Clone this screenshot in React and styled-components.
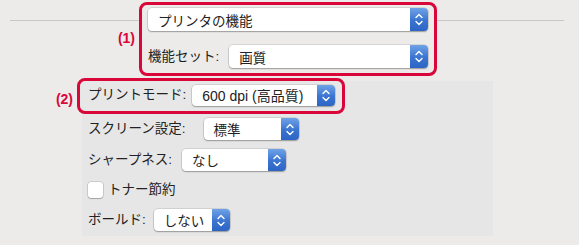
import React from "react";
import styled, { createGlobalStyle } from "styled-components";

const Global = createGlobalStyle`
  html, body { margin: 0; padding: 0; background: #ecebea; }
  body { font-family: "Liberation Sans", "Noto Sans CJK JP", sans-serif; }
`;

const RED = "#d9063a";

const Page = styled.div`
  width: 579px;
  height: 245px;
  background: #ecebea;
  color: #222;
  font-size: 13.5px;
  overflow: hidden;
`;

const TopSection = styled.div`
  display: flex;
  align-items: flex-start;
  padding-top: 2px;
  height: 78px;
  box-sizing: border-box;
`;

const Gutter = styled.div`
  width: ${(p) => p.$w}px;
  flex: none;
  display: flex;
  flex-direction: column;
  align-items: flex-start;
`;

const Rule = styled.div`
  width: ${(p) => p.$w}px;
  height: 1px;
  flex: none;
  background: #c8c8c8;
  margin-top: ${(p) => p.$mt || 0}px;
  margin-left: ${(p) => p.$ml || 0}px;
`;

const Marker = styled.div`
  align-self: stretch;
  color: ${RED};
  font-weight: bold;
  font-size: 14px;
  font-family: "Liberation Sans", sans-serif;
  text-align: right;
  padding-right: ${(p) => p.$pr}px;
  margin-top: ${(p) => p.$mt}px;
  line-height: 16px;
`;

const Callout = styled.div`
  border: 3px solid ${RED};
  border-radius: 8px;
  box-sizing: border-box;
  flex: none;
`;

const Box1 = styled(Callout)`
  width: 298px;
  height: 74px;
  padding: 3px 6px 0 6px;
  display: flex;
  flex-direction: column;
  gap: 14px;
`;

const Box2 = styled(Callout)`
  align-self: flex-start;
  margin: -3px 0 0 -11px;
  padding: 3px 7px 5px 8px;
  display: flex;
  align-items: center;
  gap: 6px;
  background: #e7e7e7;
`;

const Middle = styled.div`
  display: flex;
  align-items: flex-start;
  margin-top: 3px;
`;

const Panel = styled.div`
  width: 411px;
  height: 155px;
  background: #e6e6e6;
  padding-left: 6px;
  box-sizing: border-box;
  display: flex;
  flex-direction: column;
`;

const Rows = styled.div`
  display: flex;
  flex-direction: column;
  gap: 9px;
  margin-top: 4px;
`;

const Row = styled.div`
  display: flex;
  align-items: center;
  gap: ${(p) => p.$gap ?? 10}px;
  height: ${(p) => p.$h || 22}px;
`;

const Label = styled.span`
  white-space: nowrap;
  line-height: 22px;
`;

const SelectBox = styled.div`
  width: ${(p) => p.$w}px;
  height: ${(p) => p.$h || 22}px;
  flex: none;
  display: flex;
  align-items: stretch;
  background: #fff;
  border-radius: 4px;
  box-shadow: 0 0 0 0.5px rgba(0, 0, 0, 0.18), 0 1px 1.5px rgba(0, 0, 0, 0.28);
  box-sizing: border-box;
`;

const SelectText = styled.span`
  flex: 1;
  padding-left: 10px;
  display: flex;
  align-items: center;
  white-space: nowrap;
  font-size: ${(p) => p.$fs || 13.5}px;
`;

const Stepper = styled.div`
  width: 18px;
  flex: none;
  border-radius: 0 4px 4px 0;
  background: linear-gradient(#6fa2e6, #3a74d0 55%, #2c65c4);
  display: flex;
  align-items: center;
  justify-content: center;
`;

const Check = styled.div`
  width: 15px;
  height: 16px;
  background: #fff;
  border-radius: 3px;
  box-shadow: 0 0 0 0.5px rgba(0, 0, 0, 0.22), 0 1px 1px rgba(0, 0, 0, 0.2);
`;

const Chevrons = () => (
  <svg width="10" height="15" viewBox="0 0 10 15">
    <path d="M2 5.5 L5 2.5 L8 5.5" fill="none" stroke="#fff" strokeWidth="1.4" strokeLinecap="round" strokeLinejoin="round" />
    <path d="M2 9.5 L5 12.5 L8 9.5" fill="none" stroke="#fff" strokeWidth="1.4" strokeLinecap="round" strokeLinejoin="round" />
  </svg>
);

const Select = ({ w, h, fs, children }) => (
  <SelectBox $w={w} $h={h}>
    <SelectText $fs={fs}>{children}</SelectText>
    <Stepper>
      <Chevrons />
    </Stepper>
  </SelectBox>
);

export default function App() {
  return (
    <Page>
      <Global />
      <TopSection>
        <Gutter $w={139}>
          <Rule $w={129} $ml={10} $mt={18} />
          <Marker $pr={4} $mt={9}>(1)</Marker>
        </Gutter>
        <Box1>
          <Select w={280} h={23}>プリンタの機能</Select>
          <Row $gap={10} $h={23}>
            <Label>機能セット:</Label>
            <Select w={199} h={23}>画質</Select>
          </Row>
        </Box1>
        <Gutter $w={128}>
          <Rule $w={127} $mt={18} />
        </Gutter>
      </TopSection>
      <Middle>
        <Gutter $w={82}>
          <Marker $pr={9} $mt={10}>(2)</Marker>
        </Gutter>
        <Panel>
          <Box2>
            <Label>プリントモード:</Label>
            <Select w={143} h={21} fs={14}>600 dpi (高品質)</Select>
          </Box2>
          <Rows>
            <Row $gap={18}>
              <Label>スクリーン設定:</Label>
              <Select w={95}>標準</Select>
            </Row>
            <Row $gap={10}>
              <Label>シャープネス:</Label>
              <Select w={104}>なし</Select>
            </Row>
            <Row $gap={5} $h={20}>
              <Check />
              <Label>トナー節約</Label>
            </Row>
            <Row $gap={8}>
              <Label>ボールド:</Label>
              <Select w={76}>しない</Select>
            </Row>
          </Rows>
        </Panel>
      </Middle>
    </Page>
  );
}
